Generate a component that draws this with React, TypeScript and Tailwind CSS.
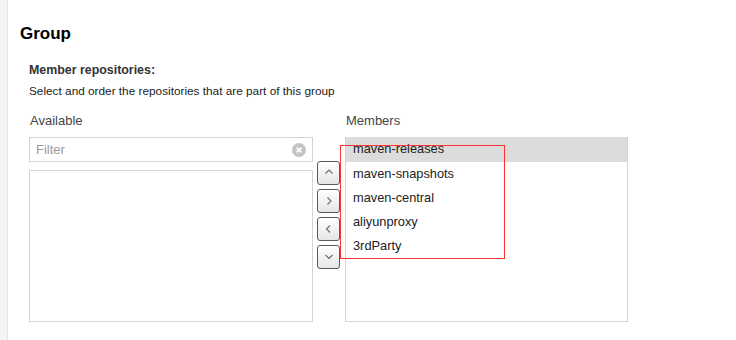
import React from "react";

const members = [
  "maven-releases",
  "maven-snapshots",
  "maven-central",
  "aliyunproxy",
  "3rdParty",
];

const Chevron: React.FC<{ dir: "up" | "down" | "left" | "right" }> = ({ dir }) => {
  const d = {
    up: "M1.5 5.5 L5 2 L8.5 5.5",
    down: "M1.5 3 L5 6.5 L8.5 3",
    left: "M6 1.5 L2.5 5 L6 8.5",
    right: "M3.5 1.5 L7 5 L3.5 8.5",
  }[dir];
  return (
    <svg width="10" height="10" viewBox="0 0 10 10" className="block">
      <path d={d} fill="none" stroke="#6b6b6b" strokeWidth="1.1" />
    </svg>
  );
};

const MoveButton: React.FC<{ dir: "up" | "down" | "left" | "right" }> = ({ dir }) => (
  <button className="flex h-[24px] w-[23px] items-center justify-center rounded-[3px] border border-[#5a5a5a] bg-gradient-to-b from-white to-[#e6e6e6]">
    <Chevron dir={dir} />
  </button>
);

export default function App() {
  return (
    <div className="flex h-[340px] w-[736px] bg-white font-['Liberation_Sans',Arial,sans-serif] text-[#222]">
      <div className="w-[8px] shrink-0 border-r border-[#e4e4e4] bg-[#f4f4f4]" />
      <div className="flex-1 pl-[12px] pt-[24px]">
        <h1 className="text-[17px] font-bold leading-[20px] text-black">Group</h1>
        <div className="pl-[9px] pt-[18px]">
          <div className="text-[12.4px] font-bold leading-[16px] text-[#333]">
            Member repositories:
          </div>
          <div className="pt-[6px] text-[11.8px] leading-[14px] text-[#222]">
            Select and order the repositories that are part of this group
          </div>
          <div className="flex pt-[15px]">
            <div className="w-[284px]">
              <div className="h-[24px] pl-px text-[13px] leading-[16px] text-[#444]">Available</div>
              <div className="flex h-[25px] items-center justify-between border border-[#d4d4d4] px-[6px]">
                <span className="text-[13px] text-[#9a9a9a]">Filter</span>
                <svg width="14" height="14" viewBox="0 0 14 14">
                  <circle cx="7" cy="7" r="7" fill="#c4c4c4" />
                  <path d="M4.6 4.6 L9.4 9.4 M9.4 4.6 L4.6 9.4" stroke="#fff" strokeWidth="1.8" />
                </svg>
              </div>
              <div className="mt-[8px] h-[152px] border border-[#d4d4d4] bg-white" />
            </div>
            <div className="ml-[4px] flex flex-col gap-[4px] pt-[48px]">
              <MoveButton dir="up" />
              <MoveButton dir="right" />
              <MoveButton dir="left" />
              <MoveButton dir="down" />
            </div>
            <div className="ml-[5px] w-[283px]">
              <div className="h-[24px] pl-px text-[13px] leading-[16px] text-[#444]">Members</div>
              <div className="relative h-[185px] border border-[#d4d4d4] bg-white">
                {members.map((m, i) => (
                  <div
                    key={m}
                    className={
                      "h-[24px] pl-[7px] text-[12.8px] leading-[24px] text-[#222] " +
                      (i === 0 ? "-mt-px h-[25px] bg-[#dcdcdc]" : "")
                    }
                  >
                    {m}
                  </div>
                ))}
                <div className="pointer-events-none absolute left-[-6px] top-[7px] h-[114px] w-[165px] border border-[#ff3333]" />
              </div>
            </div>
          </div>
        </div>
      </div>
    </div>
  );
}
